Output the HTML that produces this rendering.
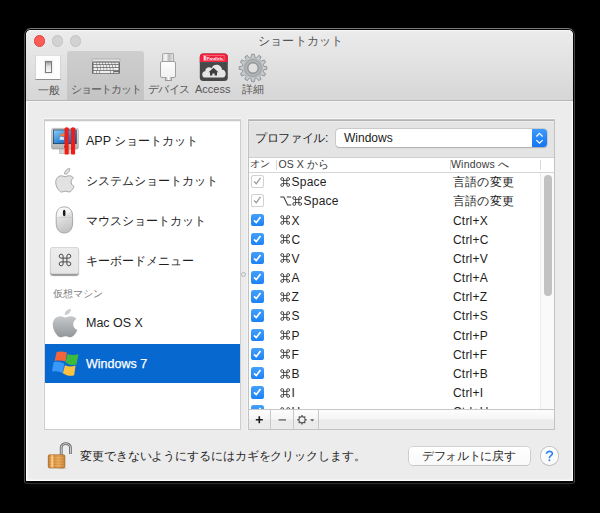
<!DOCTYPE html>
<html><head><meta charset="utf-8">
<style>
*{box-sizing:border-box;margin:0;padding:0}
html,body{width:600px;height:513px;overflow:hidden;background:#000}
body{position:relative;font-family:"Liberation Sans",sans-serif;color:#222}
.a{position:absolute}
.t{position:absolute;white-space:nowrap;line-height:14px}
#frame{left:24px;top:28px;width:551px;height:456px;border:1px solid #474747;border-top-color:#7a7a7a;border-bottom-color:#2e2e2e;border-radius:7px 7px 3px 3px;background:#050505}
#win{left:26px;top:30px;width:547px;height:451.4px;border-radius:5px 5px 1px 1px;background:#ececec;overflow:hidden;box-shadow:inset 0 0 0 1px rgba(255,255,255,.85),inset 0 0 0 2px rgba(255,255,255,.35)}
#tb{left:0;top:0;width:547px;height:70px;background:linear-gradient(#ececec,#d6d6d6);border-radius:5px 5px 0 0;box-shadow:inset 0 1px 0 #f7f7f7}
#sep{left:0;top:70px;width:547px;height:1px;background:#b6b6b6}
#sep2{left:0;top:71px;width:547px;height:1px;background:#f3f3f3}
.sb{font-size:12px;letter-spacing:-0.05px;color:#1e1e1e}
.lat{font-size:12.5px;letter-spacing:0}
.rt{font-size:12px;letter-spacing:0.2px;color:#1e1e1e}
.cbon{width:12.4px;height:12.4px;border-radius:2.6px;background:linear-gradient(#45a0fc,#1b82f6);}
.cboff{width:12.4px;height:12.4px;border-radius:2.6px;background:#fff;box-shadow:inset 0 0 0 1px #d2d2d2}
.cm{vertical-align:-0.5px;margin-right:0.6px}
.op{vertical-align:-0.5px;margin-right:0px}
.cbon svg,.cboff svg{display:block}
.tl{position:absolute;top:35.1px;width:11.5px;height:11.5px;border-radius:50%}
</style></head><body>
<div class="a" style="left:30px;top:484px;width:540px;height:6px;background:linear-gradient(#0c0c0c,#000)"></div>
<div id="frame" class="a"></div>
<div id="win" class="a">
  <div id="tb" class="a"></div>
  <div id="sep" class="a"></div>
  <div id="sep2" class="a"></div>
</div>
<!-- traffic lights -->
<div class="tl" style="left:33.55px;background:#fc5b57;border:1px solid #e0443e"></div>
<div class="tl" style="left:51.65px;background:#d2d2d2;border:1px solid #c3c3c3"></div>
<div class="tl" style="left:69.85px;background:#d2d2d2;border:1px solid #c3c3c3"></div>
<div class="t" style="left:258px;top:34px;font-size:12px;letter-spacing:0.2px;color:#555">ショートカット</div>

<!-- selected toolbar item -->
<div class="a" style="left:67px;top:51px;width:77px;height:49px;background:linear-gradient(#cecece,#c4c4c4);border-radius:3px 3px 0 0"></div>


<!-- toolbar icons -->
<div class="a" style="left:35px;top:55px;width:26px;height:25px;background:#fdfdfd;border:1px solid #d4d4d4;border-bottom:1px solid #8e8e8e;border-top-color:#e0e0e0"></div>
<div class="a" style="left:44px;top:60px;width:9px;height:14px;background:#f2f2f2;border-radius:2px;box-shadow:0 0 1px #cfcfcf"></div>
<div class="a" style="left:45px;top:61px;width:7px;height:12px;border:1px solid #7a7a7a;background:linear-gradient(#9c9c9c,#e2e2e2 45%,#fafafa)"></div>

<svg class="a" style="left:91px;top:58px" width="30" height="17" viewBox="0 0 30 17">
  <rect x="1" y="1" width="28" height="3" rx="1" fill="#e2e2e2" stroke="#9a9a9a" stroke-width=".6"/>
  <rect x="1" y="3.5" width="28" height="12.5" rx="1.5" fill="#6a6a6a"/>
  <g fill="#eeeeee">
    <rect x="2.5" y="4.6" width="2.6" height="1.6"/><rect x="5.6" y="4.6" width="2.6" height="1.6"/><rect x="8.7" y="4.6" width="2.6" height="1.6"/><rect x="11.8" y="4.6" width="2.6" height="1.6"/><rect x="14.9" y="4.6" width="2.6" height="1.6"/><rect x="18" y="4.6" width="2.6" height="1.6"/><rect x="21.1" y="4.6" width="2.6" height="1.6"/><rect x="24.2" y="4.6" width="3.3" height="1.6"/>
    <rect x="2.5" y="7" width="3.2" height="2.2"/><rect x="6.3" y="7" width="2.6" height="2.2"/><rect x="9.4" y="7" width="2.6" height="2.2"/><rect x="12.5" y="7" width="2.6" height="2.2"/><rect x="15.6" y="7" width="2.6" height="2.2"/><rect x="18.7" y="7" width="2.6" height="2.2"/><rect x="21.8" y="7" width="2.6" height="2.2"/><rect x="24.9" y="7" width="2.6" height="2.2"/>
    <rect x="2.5" y="10" width="3.8" height="2.2"/><rect x="6.9" y="10" width="2.6" height="2.2"/><rect x="10" y="10" width="2.6" height="2.2"/><rect x="13.1" y="10" width="2.6" height="2.2"/><rect x="16.2" y="10" width="2.6" height="2.2"/><rect x="19.3" y="10" width="2.6" height="2.2"/><rect x="22.4" y="10" width="5.1" height="2.2"/>
    <rect x="2.5" y="13" width="2.6" height="2.2"/><rect x="5.6" y="13" width="2.6" height="2.2"/><rect x="8.7" y="13" width="10.5" height="2.2"/><rect x="19.7" y="13" width="2.6" height="2.2"/><rect x="23" y="14.2" width="4.5" height="1"/>
  </g>
</svg>

<!-- USB -->
<div class="a" style="left:162px;top:53px;width:12px;height:9px;border:1px solid #a9a9a9;border-bottom:none;border-radius:2px 2px 0 0;background:linear-gradient(90deg,#dcdcdc,#f8f8f8 30%,#b9b9b9 60%,#e4e4e4)"></div>
<div class="a" style="left:160px;top:61px;width:16px;height:17px;border:1px solid #a0a0a0;border-radius:2px;background:linear-gradient(#fefefe,#f1f1f1)"></div>
<div class="a" style="left:165px;top:77px;width:7px;height:4px;border:1px solid #9a9a9a;border-top:none;background:linear-gradient(90deg,#bdbdbd,#fafafa 50%,#c4c4c4)"></div>

<!-- Access -->
<svg class="a" style="left:199px;top:53px" width="30" height="29" viewBox="0 0 30 29">
  <defs><clipPath id="acc"><rect x="0.8" y="0.6" width="28" height="27.4" rx="3.5"/></clipPath></defs>
  <g clip-path="url(#acc)">
    <rect x="0" y="0" width="30" height="29" fill="#474849"/>
    <rect x="0" y="0" width="30" height="9" fill="#f0203c"/>
    <rect x="0" y="9" width="30" height="1" fill="#3c5a5e"/>
  </g>
  <rect x="4.3" y="2.4" width="20.8" height="5.2" fill="none" stroke="#ff9aa6" stroke-width=".5"/>
  <rect x="5" y="2.9" width="2.2" height="4.3" fill="#fff"/><rect x="5.85" y="2.9" width=".5" height="4.3" fill="#f0203c"/>
  <text x="7.8" y="6.5" font-size="4" font-weight="bold" fill="#fff" font-family="Liberation Sans" textLength="16.2" lengthAdjust="spacingAndGlyphs">Parallels</text>
  <path d="M6.2 24.6 C2.4 24.6 2.2 18.4 6.2 18.2 C6.4 14.4 10.4 13 12.6 15.2 C14.2 10.2 22.4 10.6 23 16.8 C27.6 16.4 28 24.6 23.8 24.6 Z" fill="#e6e6e6"/>
  <path d="M9.6 19.2 L14.5 14.7 L19.4 19.2 L18 19.2 L18 22.6 L15.6 22.6 L15.6 20.4 L13.4 20.4 L13.4 22.6 L11 22.6 L11 19.2 Z" fill="#3e3e3e"/>
</svg>

<!-- Gear -->
<svg class="a" style="left:235.9px;top:50.7px" width="34" height="34" viewBox="-17 -17 34 34">
  <defs><radialGradient id="gg" cx="0" cy="0" r="15" gradientUnits="userSpaceOnUse"><stop offset="0.33" stop-color="#8c9193"/><stop offset="0.45" stop-color="#b4b8ba"/><stop offset="0.56" stop-color="#a2a6a8"/><stop offset="0.7" stop-color="#ccd0d1"/><stop offset="1" stop-color="#b2b6b8"/></radialGradient></defs>
  <path id="gearp" fill="url(#gg)" stroke="#8a8e90" stroke-width="0.8" fill-rule="evenodd" d="M-1.76 -10.76 L-1.45 -13.82 L1.45 -13.82 L1.76 -10.76 L3.85 -10.20 L5.65 -12.70 L8.17 -11.25 L6.90 -8.43 L8.43 -6.90 L11.25 -8.17 L12.70 -5.65 L10.20 -3.85 L10.76 -1.76 L13.82 -1.45 L13.82 1.45 L10.76 1.76 L10.20 3.85 L12.70 5.65 L11.25 8.17 L8.43 6.90 L6.90 8.43 L8.17 11.25 L5.65 12.70 L3.85 10.20 L1.76 10.76 L1.45 13.82 L-1.45 13.82 L-1.76 10.76 L-3.85 10.20 L-5.65 12.70 L-8.17 11.25 L-6.90 8.43 L-8.43 6.90 L-11.25 8.17 L-12.70 5.65 L-10.20 3.85 L-10.76 1.76 L-13.82 1.45 L-13.82 -1.45 L-10.76 -1.76 L-10.20 -3.85 L-12.70 -5.65 L-11.25 -8.17 L-8.43 -6.90 L-6.90 -8.43 L-8.17 -11.25 L-5.65 -12.70 L-3.85 -10.20 Z M5.0 0 A5.0 5.0 0 1 0 -5.0 0 A5.0 5.0 0 1 0 5.0 0 Z"/>
</svg>


<!-- toolbar labels -->
<div class="t" style="left:38px;top:83px;font-size:11px;letter-spacing:-0.5px;color:#575757">一般</div>
<div class="t" style="left:71px;top:82px;font-size:11px;letter-spacing:-1px;color:#575757">ショートカット</div>
<div class="t" style="left:148px;top:82px;font-size:11px;letter-spacing:-0.6px;color:#575757">デバイス</div>
<div class="t" style="left:195px;top:82px;font-size:11px;color:#575757">Access</div>
<div class="t" style="left:242px;top:82px;font-size:11px;letter-spacing:-0.5px;color:#575757">詳細</div>

<!-- sidebar -->
<div class="a" style="left:44px;top:119px;width:197px;height:311px;background:#fff;border:1px solid #cdcdcd;border-top-color:#d2d2d2;box-shadow:inset 0 1px 0 #c9c9c9,inset 0 2px 0 #f1f1f1,0 -1px 0 #f6f6f6,-1px 0 0 #f0f0f0"></div>
<div class="a" style="left:45px;top:343.5px;width:195px;height:39.3px;background:#0768d0"></div>

<div class="t sb" style="left:86px;top:134px"><span class="lat">APP </span>ショートカット</div>
<div class="t sb" style="left:86px;top:174px">システムショートカット</div>
<div class="t sb" style="left:86px;top:214px">マウスショートカット</div>
<div class="t sb" style="left:86px;top:254px">キーボードメニュー</div>
<div class="t" style="left:53px;top:287px;font-size:10px;letter-spacing:0;color:#808080">仮想マシン</div>
<div class="t sb lat" style="left:86px;top:316px">Mac OS X</div>
<div class="t sb lat" style="left:86px;top:357px;color:#fff;-webkit-text-stroke:0.25px #fff">Windows 7</div>


<!-- sidebar icons -->
<svg class="a" style="left:50px;top:126px" width="30" height="30" viewBox="0 0 30 30">
  <defs><linearGradient id="mon" x1="0" y1="0" x2="0" y2="1"><stop offset="0" stop-color="#ececec"/><stop offset=".7" stop-color="#c9c9c9"/><stop offset="1" stop-color="#b0b0b0"/></linearGradient>
  <linearGradient id="scr" x1="0" y1="0" x2="1" y2="1"><stop offset="0" stop-color="#8fd0f4"/><stop offset=".55" stop-color="#2f86d6"/><stop offset="1" stop-color="#1a4a94"/></linearGradient></defs>
  <rect x="9.6" y="22.8" width="10.6" height="4.7" fill="#d4d4d4" stroke="#a0a0a0" stroke-width=".5"/>
  <rect x="1.6" y="2.4" width="26.7" height="20.6" rx="1.6" fill="url(#mon)" stroke="#959595" stroke-width=".6"/>
  <rect x="3.3" y="3.9" width="22.9" height="13.8" fill="url(#scr)" stroke="#12284a" stroke-width=".7"/>
  <path d="M10.4 8.2 C11.6 7.4 13 7.4 14.6 8.2 L14.2 10.8 C12.8 10.2 11.4 10.2 10 10.8 Z" fill="#f47a3a"/>
  <path d="M9.9 11.3 C11.2 10.7 12.6 10.7 14.1 11.4 L13.7 14.2 C12.3 13.5 10.9 13.5 9.5 14.1 Z" fill="#cfe9ff"/>
  <circle cx="14.9" cy="20.6" r=".9" fill="#333"/>
  <path d="M14.6 2.2 Q16.65 0.4 18.7 2.2 V28.2 Q16.65 29 14.6 28.2 Z" fill="#f21c12"/>
  <path d="M21 2.2 Q23.05 0.4 25.1 2.2 V28.2 Q23.05 29 21 28.2 Z" fill="#f21c12"/>
</svg>
<svg class="a" style="left:48px;top:164px" width="34" height="34" viewBox="48 164 34 34">
  <path d="M12.152 6.896c-.948 0-2.415-1.078-3.96-1.04-2.04.027-3.91 1.183-4.961 3.014-2.117 3.675-.546 9.103 1.519 12.09 1.013 1.454 2.208 3.09 3.792 3.039 1.52-.065 2.09-.987 3.935-.987 1.831 0 2.35.987 3.96.948 1.637-.026 2.676-1.48 3.676-2.948 1.156-1.688 1.636-3.325 1.662-3.415-.039-.013-3.182-1.221-3.22-4.857-.026-3.04 2.48-4.494 2.597-4.559-1.429-2.09-3.623-2.324-4.39-2.376-2-.156-3.675 1.09-4.61 1.09z" transform="matrix(0.936 0 0 0.895 53.67 170.57)" fill="#e2e2e2" stroke="#a6a6a6" stroke-width="1" vector-effect="non-scaling-stroke"/>
  <path d="M15.53 3.83c.843-1.012 1.4-2.427 1.245-3.83-1.207.052-2.662.805-3.532 1.818-.78.896-1.454 2.338-1.273 3.714 1.338.104 2.715-.688 3.559-1.701z" transform="matrix(1.05 0 0 1.03 52.11 168.45)" fill="#e2e2e2" stroke="#a6a6a6" stroke-width="1" vector-effect="non-scaling-stroke"/>
</svg>
<svg class="a" style="left:55px;top:206px" width="19" height="28" viewBox="0 0 19 28">
  <defs><linearGradient id="ms" x1="0" y1="0" x2="0.3" y2="1"><stop offset="0" stop-color="#fdfdfd"/><stop offset=".4" stop-color="#f2f2f2"/><stop offset=".45" stop-color="#e2e2e2"/><stop offset="1" stop-color="#c4c4c4"/></linearGradient></defs>
  <path d="M9.3 0.9 C4 0.9 1.2 4.2 1.2 10.5 V17 C1.2 23.5 4.4 27 9.3 27 C14.2 27 17.6 23.5 17.6 17 V10.5 C17.6 4.2 14.6 0.9 9.3 0.9 Z" fill="url(#ms)" stroke="#a0a0a0" stroke-width=".9"/>
  <path d="M1.3 11.4 H17.7" stroke="#bdbdbd" stroke-width=".6"/>
  <ellipse cx="9.2" cy="7" rx="1.3" ry="3.3" fill="#1a1a1a"/>
</svg>
<div class="a" style="left:50px;top:247px;width:29px;height:27px;border-radius:3.5px;background:linear-gradient(#ececec,#e6e6e6);box-shadow:inset 0 0 0 .6px #c4c4c4,0 1.2px 1px #9a9a9a"></div>
<svg class="a" style="left:57px;top:252px" width="16" height="16" viewBox="-8 -8 16 16"><path d="M-1.9 -1.9 V-3.9 A1.95 1.95 0 1 0 -3.9 -1.9 H3.9 A1.95 1.95 0 1 0 1.9 -3.9 V3.9 A1.95 1.95 0 1 0 3.9 1.9 H-3.9 A1.95 1.95 0 1 0 -1.9 3.9 Z" fill="none" stroke="#4a4a4a" stroke-width="1"/></svg>
<svg class="a" style="left:48px;top:304px" width="34" height="38" viewBox="48 304 34 38">
  <defs><linearGradient id="mac" x1="0" y1="0" x2="0" y2="1"><stop offset="0" stop-color="#c6c9cb"/><stop offset="1" stop-color="#939698"/></linearGradient><linearGradient id="mac2" x1="0" y1="0" x2="0" y2="1"><stop offset="0" stop-color="#d0d2d4"/><stop offset="1" stop-color="#c4c7c9"/></linearGradient></defs>
  <path d="M12.152 6.896c-.948 0-2.415-1.078-3.96-1.04-2.04.027-3.91 1.183-4.961 3.014-2.117 3.675-.546 9.103 1.519 12.09 1.013 1.454 2.208 3.09 3.792 3.039 1.52-.065 2.09-.987 3.935-.987 1.831 0 2.35.987 3.96.948 1.637-.026 2.676-1.48 3.676-2.948 1.156-1.688 1.636-3.325 1.662-3.415-.039-.013-3.182-1.221-3.22-4.857-.026-3.04 2.48-4.494 2.597-4.559-1.429-2.09-3.623-2.324-4.39-2.376-2-.156-3.675 1.09-4.61 1.09z" transform="matrix(1.253 0 0 1.159 50.01 309.49)" fill="url(#mac)"/>
  <path d="M15.53 3.83c.843-1.012 1.4-2.427 1.245-3.83-1.207.052-2.662.805-3.532 1.818-.78.896-1.454 2.338-1.273 3.714 1.338.104 2.715-.688 3.559-1.701z" transform="matrix(1.296 0 0 1.119 49.23 308.8)" fill="url(#mac2)"/>
</svg>
<svg class="a" style="left:50px;top:349px" width="30" height="28" viewBox="50 349 30 28">
  <path d="M56.6 352 C59.5 351 63 351.4 66.9 352.6 L65.6 361.6 C62 360.4 58 360.2 54.6 360.9 Z" fill="#f2643a"/>
  <path d="M67.5 354 C71 355.4 74.5 355.4 78.5 354.3 L76.5 364.6 C72.6 365.6 69 365.2 65.6 362.2 Z" fill="#3cba3c"/>
  <path d="M53.6 362.2 C57 361.4 60.8 361.7 64.2 363.6 L62.9 373.2 C59.5 371.4 55.5 371 52 371.5 Z" fill="#3a98f8"/>
  <path d="M64.9 365.2 C68.4 366.8 72 366.8 75.5 365.5 L74.2 375.2 C70.5 376.4 66.5 375.6 62.9 373.2 Z" fill="#fdc23f"/>
</svg>
<!-- lock -->
<svg class="a" style="left:46px;top:441px" width="28" height="30" viewBox="0 0 28 30">
  <defs><linearGradient id="lk" x1="0" y1="0" x2="1" y2="0"><stop offset="0" stop-color="#b9681a"/><stop offset=".12" stop-color="#d98a30"/><stop offset=".24" stop-color="#f7d49a"/><stop offset=".34" stop-color="#d48428"/><stop offset=".6" stop-color="#e0a050"/><stop offset="1" stop-color="#c27426"/></linearGradient>
  <pattern id="lkp" width="2" height="1.6" patternUnits="userSpaceOnUse"><rect width="2" height=".7" fill="rgba(255,235,190,.28)"/></pattern></defs>
  <path d="M15.2 14 V6.6 C15.2 1.3 24.4 1.3 24.4 6.6 V13" fill="none" stroke="#6c6c6c" stroke-width="2.8"/>
  <path d="M15.2 14 V6.6 C15.2 1.3 24.4 1.3 24.4 6.6 V12.6" fill="none" stroke="#d4d4d4" stroke-width="1"/>
  <rect x="2.3" y="13.8" width="16.6" height="13.2" rx="1.4" fill="url(#lk)" stroke="#9a5410" stroke-width=".6"/>
  <rect x="2.6" y="14.2" width="16" height="12.5" fill="url(#lkp)"/>
  <ellipse cx="17" cy="27.4" rx="5" ry=".8" fill="rgba(0,0,0,.08)"/>
</svg>

<!-- right panel -->
<div class="a" style="left:248px;top:119px;width:307px;height:311px;background:#e4e4e4;border:1px solid #c2c2c2;border-top-color:#c4c4c4;box-shadow:inset 0 1px 0 #b4b4b4,inset 0 2px 0 #ececec,0 -1px 0 #f6f6f6,-1px 0 0 #f3f3f3"></div>
<div class="t" style="left:255px;top:131px;font-size:12px;letter-spacing:-0.35px;color:#262626">プロファイル:</div>
<div class="a" style="left:335.6px;top:129.4px;width:211.4px;height:17.8px;background:#fff;border-radius:3.5px;box-shadow:0 0 0 .5px #b5b5b5,0 .5px 1px rgba(0,0,0,.25)"></div>
<div class="a" style="left:532px;top:129.4px;width:15px;height:17.8px;background:linear-gradient(#3b9bfb,#1474f4);border-radius:0 3.5px 3.5px 0"></div>
<svg class="a" style="left:532px;top:128.8px" width="15" height="19" viewBox="0 0 15 19"><path d="M4.4 7.5 L7.5 4.4 L10.6 7.5 M4.4 11.1 L7.5 14.2 L10.6 11.1" fill="none" stroke="#fff" stroke-width="1.25"/></svg>
<div class="t" style="left:344px;top:131px;font-size:12px;color:#1a1a1a">Windows</div>

<!-- table -->
<div class="a" style="left:249px;top:157px;width:305px;height:252px;background:#fff;border-top:1px solid #d0d0d0"></div>
<div class="a" style="left:249px;top:172px;width:305px;height:1px;background:#d6d6d6"></div>
<div class="a" style="left:276px;top:160px;width:1px;height:10px;background:#d8d8d8"></div>
<div class="a" style="left:450px;top:160px;width:1px;height:10px;background:#d8d8d8"></div>
<div class="a" style="left:540px;top:160px;width:1px;height:10px;background:#d8d8d8"></div>
<div class="t" style="left:250px;top:157px;font-size:10px;letter-spacing:-0.1px;color:#3a3a3a">オン</div>
<div class="t" style="left:278.6px;top:157px;font-size:10.5px;letter-spacing:0px;color:#3a3a3a">OS X から</div>
<div class="t" style="left:451px;top:157px;font-size:10.5px;letter-spacing:0.2px;color:#3a3a3a">Windows へ</div>
<div id="rowsbox" class="a" style="left:249px;top:173px;width:291px;height:236px;overflow:hidden">
<div class="a cboff" style="left:2.3px;top:2.30px"><svg width="12.4" height="12.4" viewBox="0 0 12.4 12.4"><path d="M3 6.5 L5.3 8.6 L9.5 2.9" fill="none" stroke="#a2a2a2" stroke-width="1.4"/></svg></div>
<div class="t rt" style="left:31px;top:2.30px"><svg class="cm" width="11" height="10" viewBox="-5.2 -5 11 10"><path d="M-1.6 -1.6 V-3.0 A1.4 1.4 0 1 0 -3.0 -1.6 H3.0 A1.4 1.4 0 1 0 1.6 -3.0 V3.0 A1.4 1.4 0 1 0 3.0 1.6 H-3.0 A1.4 1.4 0 1 0 -1.6 3.0 Z" fill="none" stroke="#404040" stroke-width="0.95"/></svg>Space</div>
<div class="t rt" style="left:204px;top:2.30px">言語の変更</div>
<div class="a cboff" style="left:2.3px;top:21.47px"><svg width="12.4" height="12.4" viewBox="0 0 12.4 12.4"><path d="M3 6.5 L5.3 8.6 L9.5 2.9" fill="none" stroke="#a2a2a2" stroke-width="1.4"/></svg></div>
<div class="t rt" style="left:31px;top:21.47px"><svg class="op" width="12" height="10" viewBox="0 0 12 10"><path d="M0.3 1 H3.8 L7.6 9 H11.2 M6.8 1 H11.2" fill="none" stroke="#383838" stroke-width="1.05"/></svg><svg class="cm" width="11" height="10" viewBox="-5.2 -5 11 10"><path d="M-1.6 -1.6 V-3.0 A1.4 1.4 0 1 0 -3.0 -1.6 H3.0 A1.4 1.4 0 1 0 1.6 -3.0 V3.0 A1.4 1.4 0 1 0 3.0 1.6 H-3.0 A1.4 1.4 0 1 0 -1.6 3.0 Z" fill="none" stroke="#404040" stroke-width="0.95"/></svg>Space</div>
<div class="t rt" style="left:204px;top:21.47px">言語の変更</div>
<div class="a cbon" style="left:2.3px;top:40.64px"><svg width="12.4" height="12.4" viewBox="0 0 12.4 12.4"><path d="M3 6.5 L5.3 8.6 L9.5 2.9" fill="none" stroke="#fff" stroke-width="1.7"/></svg></div>
<div class="t rt" style="left:31px;top:40.64px"><svg class="cm" width="11" height="10" viewBox="-5.2 -5 11 10"><path d="M-1.6 -1.6 V-3.0 A1.4 1.4 0 1 0 -3.0 -1.6 H3.0 A1.4 1.4 0 1 0 1.6 -3.0 V3.0 A1.4 1.4 0 1 0 3.0 1.6 H-3.0 A1.4 1.4 0 1 0 -1.6 3.0 Z" fill="none" stroke="#404040" stroke-width="0.95"/></svg>X</div>
<div class="t rt" style="left:204px;top:40.64px">Ctrl+X</div>
<div class="a cbon" style="left:2.3px;top:59.81px"><svg width="12.4" height="12.4" viewBox="0 0 12.4 12.4"><path d="M3 6.5 L5.3 8.6 L9.5 2.9" fill="none" stroke="#fff" stroke-width="1.7"/></svg></div>
<div class="t rt" style="left:31px;top:59.81px"><svg class="cm" width="11" height="10" viewBox="-5.2 -5 11 10"><path d="M-1.6 -1.6 V-3.0 A1.4 1.4 0 1 0 -3.0 -1.6 H3.0 A1.4 1.4 0 1 0 1.6 -3.0 V3.0 A1.4 1.4 0 1 0 3.0 1.6 H-3.0 A1.4 1.4 0 1 0 -1.6 3.0 Z" fill="none" stroke="#404040" stroke-width="0.95"/></svg>C</div>
<div class="t rt" style="left:204px;top:59.81px">Ctrl+C</div>
<div class="a cbon" style="left:2.3px;top:78.98px"><svg width="12.4" height="12.4" viewBox="0 0 12.4 12.4"><path d="M3 6.5 L5.3 8.6 L9.5 2.9" fill="none" stroke="#fff" stroke-width="1.7"/></svg></div>
<div class="t rt" style="left:31px;top:78.98px"><svg class="cm" width="11" height="10" viewBox="-5.2 -5 11 10"><path d="M-1.6 -1.6 V-3.0 A1.4 1.4 0 1 0 -3.0 -1.6 H3.0 A1.4 1.4 0 1 0 1.6 -3.0 V3.0 A1.4 1.4 0 1 0 3.0 1.6 H-3.0 A1.4 1.4 0 1 0 -1.6 3.0 Z" fill="none" stroke="#404040" stroke-width="0.95"/></svg>V</div>
<div class="t rt" style="left:204px;top:78.98px">Ctrl+V</div>
<div class="a cbon" style="left:2.3px;top:98.15px"><svg width="12.4" height="12.4" viewBox="0 0 12.4 12.4"><path d="M3 6.5 L5.3 8.6 L9.5 2.9" fill="none" stroke="#fff" stroke-width="1.7"/></svg></div>
<div class="t rt" style="left:31px;top:98.15px"><svg class="cm" width="11" height="10" viewBox="-5.2 -5 11 10"><path d="M-1.6 -1.6 V-3.0 A1.4 1.4 0 1 0 -3.0 -1.6 H3.0 A1.4 1.4 0 1 0 1.6 -3.0 V3.0 A1.4 1.4 0 1 0 3.0 1.6 H-3.0 A1.4 1.4 0 1 0 -1.6 3.0 Z" fill="none" stroke="#404040" stroke-width="0.95"/></svg>A</div>
<div class="t rt" style="left:204px;top:98.15px">Ctrl+A</div>
<div class="a cbon" style="left:2.3px;top:117.32px"><svg width="12.4" height="12.4" viewBox="0 0 12.4 12.4"><path d="M3 6.5 L5.3 8.6 L9.5 2.9" fill="none" stroke="#fff" stroke-width="1.7"/></svg></div>
<div class="t rt" style="left:31px;top:117.32px"><svg class="cm" width="11" height="10" viewBox="-5.2 -5 11 10"><path d="M-1.6 -1.6 V-3.0 A1.4 1.4 0 1 0 -3.0 -1.6 H3.0 A1.4 1.4 0 1 0 1.6 -3.0 V3.0 A1.4 1.4 0 1 0 3.0 1.6 H-3.0 A1.4 1.4 0 1 0 -1.6 3.0 Z" fill="none" stroke="#404040" stroke-width="0.95"/></svg>Z</div>
<div class="t rt" style="left:204px;top:117.32px">Ctrl+Z</div>
<div class="a cbon" style="left:2.3px;top:136.49px"><svg width="12.4" height="12.4" viewBox="0 0 12.4 12.4"><path d="M3 6.5 L5.3 8.6 L9.5 2.9" fill="none" stroke="#fff" stroke-width="1.7"/></svg></div>
<div class="t rt" style="left:31px;top:136.49px"><svg class="cm" width="11" height="10" viewBox="-5.2 -5 11 10"><path d="M-1.6 -1.6 V-3.0 A1.4 1.4 0 1 0 -3.0 -1.6 H3.0 A1.4 1.4 0 1 0 1.6 -3.0 V3.0 A1.4 1.4 0 1 0 3.0 1.6 H-3.0 A1.4 1.4 0 1 0 -1.6 3.0 Z" fill="none" stroke="#404040" stroke-width="0.95"/></svg>S</div>
<div class="t rt" style="left:204px;top:136.49px">Ctrl+S</div>
<div class="a cbon" style="left:2.3px;top:155.66px"><svg width="12.4" height="12.4" viewBox="0 0 12.4 12.4"><path d="M3 6.5 L5.3 8.6 L9.5 2.9" fill="none" stroke="#fff" stroke-width="1.7"/></svg></div>
<div class="t rt" style="left:31px;top:155.66px"><svg class="cm" width="11" height="10" viewBox="-5.2 -5 11 10"><path d="M-1.6 -1.6 V-3.0 A1.4 1.4 0 1 0 -3.0 -1.6 H3.0 A1.4 1.4 0 1 0 1.6 -3.0 V3.0 A1.4 1.4 0 1 0 3.0 1.6 H-3.0 A1.4 1.4 0 1 0 -1.6 3.0 Z" fill="none" stroke="#404040" stroke-width="0.95"/></svg>P</div>
<div class="t rt" style="left:204px;top:155.66px">Ctrl+P</div>
<div class="a cbon" style="left:2.3px;top:174.83px"><svg width="12.4" height="12.4" viewBox="0 0 12.4 12.4"><path d="M3 6.5 L5.3 8.6 L9.5 2.9" fill="none" stroke="#fff" stroke-width="1.7"/></svg></div>
<div class="t rt" style="left:31px;top:174.83px"><svg class="cm" width="11" height="10" viewBox="-5.2 -5 11 10"><path d="M-1.6 -1.6 V-3.0 A1.4 1.4 0 1 0 -3.0 -1.6 H3.0 A1.4 1.4 0 1 0 1.6 -3.0 V3.0 A1.4 1.4 0 1 0 3.0 1.6 H-3.0 A1.4 1.4 0 1 0 -1.6 3.0 Z" fill="none" stroke="#404040" stroke-width="0.95"/></svg>F</div>
<div class="t rt" style="left:204px;top:174.83px">Ctrl+F</div>
<div class="a cbon" style="left:2.3px;top:194.00px"><svg width="12.4" height="12.4" viewBox="0 0 12.4 12.4"><path d="M3 6.5 L5.3 8.6 L9.5 2.9" fill="none" stroke="#fff" stroke-width="1.7"/></svg></div>
<div class="t rt" style="left:31px;top:194.00px"><svg class="cm" width="11" height="10" viewBox="-5.2 -5 11 10"><path d="M-1.6 -1.6 V-3.0 A1.4 1.4 0 1 0 -3.0 -1.6 H3.0 A1.4 1.4 0 1 0 1.6 -3.0 V3.0 A1.4 1.4 0 1 0 3.0 1.6 H-3.0 A1.4 1.4 0 1 0 -1.6 3.0 Z" fill="none" stroke="#404040" stroke-width="0.95"/></svg>B</div>
<div class="t rt" style="left:204px;top:194.00px">Ctrl+B</div>
<div class="a cbon" style="left:2.3px;top:213.17px"><svg width="12.4" height="12.4" viewBox="0 0 12.4 12.4"><path d="M3 6.5 L5.3 8.6 L9.5 2.9" fill="none" stroke="#fff" stroke-width="1.7"/></svg></div>
<div class="t rt" style="left:31px;top:213.17px"><svg class="cm" width="11" height="10" viewBox="-5.2 -5 11 10"><path d="M-1.6 -1.6 V-3.0 A1.4 1.4 0 1 0 -3.0 -1.6 H3.0 A1.4 1.4 0 1 0 1.6 -3.0 V3.0 A1.4 1.4 0 1 0 3.0 1.6 H-3.0 A1.4 1.4 0 1 0 -1.6 3.0 Z" fill="none" stroke="#404040" stroke-width="0.95"/></svg>I</div>
<div class="t rt" style="left:204px;top:213.17px">Ctrl+I</div>
<div class="a cbon" style="left:2.3px;top:232.34px"><svg width="12.4" height="12.4" viewBox="0 0 12.4 12.4"><path d="M3 6.5 L5.3 8.6 L9.5 2.9" fill="none" stroke="#fff" stroke-width="1.7"/></svg></div>
<div class="t rt" style="left:31px;top:232.34px"><svg class="cm" width="11" height="10" viewBox="-5.2 -5 11 10"><path d="M-1.6 -1.6 V-3.0 A1.4 1.4 0 1 0 -3.0 -1.6 H3.0 A1.4 1.4 0 1 0 1.6 -3.0 V3.0 A1.4 1.4 0 1 0 3.0 1.6 H-3.0 A1.4 1.4 0 1 0 -1.6 3.0 Z" fill="none" stroke="#404040" stroke-width="0.95"/></svg>U</div>
<div class="t rt" style="left:204px;top:232.34px">Ctrl+U</div>
</div>
<!-- scrollbar -->
<div class="a" style="left:540px;top:173px;width:14px;height:236px;background:#fafafa;border-left:1px solid #ececec"></div>
<div class="a" style="left:544px;top:175px;width:7.5px;height:121px;background:#c2c2c2;border-radius:4px"></div>
<!-- bottom bar -->
<div class="a" style="left:249px;top:409px;width:305px;height:20px;background:linear-gradient(#fdfdfd,#f6f6f6 45%,#ebebeb 55%,#ebebeb);border-top:1px solid #c8c8c8"></div>
<div class="a" style="left:270px;top:410px;width:1px;height:19px;background:#c8c8c8"></div>
<div class="a" style="left:293px;top:410px;width:1px;height:19px;background:#c8c8c8"></div>
<div class="a" style="left:318px;top:410px;width:1px;height:19px;background:#c8c8c8"></div>
<svg class="a" style="left:249px;top:409px" width="80" height="20" viewBox="0 0 80 20">
  <path d="M10.3 7.3 V14.3 M6.8 10.8 H13.8" stroke="#1b1b1b" stroke-width="1.6"/>
  <path d="M29.6 10.9 H37" stroke="#606060" stroke-width="1.3"/>
  <g transform="translate(53 10.8)"><circle r="3.1" fill="none" stroke="#5a5a5a" stroke-width="1.2"/><path d="M0 -4.7 V-3 M0 3 V4.7 M-4.7 0 H-3 M3 0 H4.7 M-3.3 -3.3 L-2.1 -2.1 M2.1 2.1 L3.3 3.3 M-3.3 3.3 L-2.1 2.1 M2.1 -2.1 L3.3 -3.3" stroke="#5a5a5a" stroke-width="1.4"/></g>
  <path d="M61.2 10.2 H65.2 L63.2 12.4 Z" fill="#555"/>
</svg>
<!-- splitter dot -->
<div class="a" style="left:241px;top:272px;width:5px;height:5px;border-radius:50%;border:1px solid #b8b8b8;background:#e6e6e6"></div>

<!-- footer -->
<div class="t" style="left:80px;top:449px;font-size:12px;letter-spacing:-0.1px;color:#262626">変更できないようにするにはカギをクリックします。</div>
<div class="a" style="left:408.7px;top:447.3px;width:121.5px;height:18px;background:linear-gradient(#fff,#f9f9f9);border-radius:4px;box-shadow:0 0 0 .6px #b9b9b9,0 .6px .6px rgba(0,0,0,.22)"></div>
<div class="t" style="left:422px;top:449px;font-size:12px;letter-spacing:-0.35px;color:#262626">デフォルトに戻す</div>
<div class="a" style="left:540.5px;top:447.3px;width:17.8px;height:17.8px;border-radius:50%;background:linear-gradient(#fff,#f9f9f9);box-shadow:0 0 0 .9px #bdbdbd,0 .6px .8px rgba(0,0,0,.18)"></div>
<svg class="a" style="left:540px;top:447px" width="20" height="20" viewBox="540 447 20 20"><path d="M546.5 453.9 C546.3 450.7 552.5 450.5 552.4 453.6 C552.3 455.5 549.4 455.6 549.4 457.8 V458.3" fill="none" stroke="#2a82ee" stroke-width="1.55"/><circle cx="549.4" cy="460.2" r="0.95" fill="#2a82ee"/></svg>

</body></html>
